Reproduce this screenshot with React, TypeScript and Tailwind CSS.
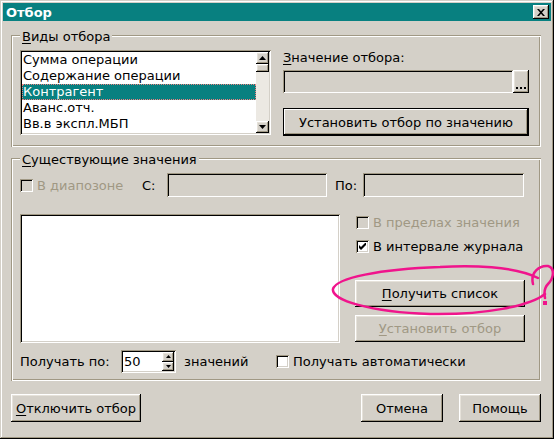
import React from 'react';

const RAISED =
  'shadow-[inset_-1px_-1px_#000000,inset_1px_1px_#ffffff,inset_-2px_-2px_#a09884,inset_2px_2px_#e6e2da]';
const RAISED_DEF =
  'border border-black shadow-[inset_-1px_-1px_#000000,inset_1px_1px_#ffffff,inset_-2px_-2px_#a09884]';
const SUNKEN =
  'shadow-[inset_1px_1px_#a09884,inset_-1px_-1px_#ffffff,inset_2px_2px_#000000,inset_-2px_-2px_#d4d0c8]';
const ETCHED =
  'shadow-[inset_1px_1px_#a09884,inset_-1px_-1px_#ffffff,inset_2px_2px_#ffffff,inset_-2px_-2px_#a09884]';

function U({ children }: { children: React.ReactNode }) {
  return <span className="underline decoration-1 underline-offset-[2px]">{children}</span>;
}

function Btn({
  children,
  className = '',
  def = false,
  disabled = false,
}: {
  children: React.ReactNode;
  className?: string;
  def?: boolean;
  disabled?: boolean;
}) {
  return (
    <div
      className={`flex items-center justify-center bg-[#d4d0c8] ${def ? RAISED_DEF : RAISED} ${
        disabled ? 'text-[#a09884]' : 'text-black'
      } ${className}`}
    >
      {children}
    </div>
  );
}

function Check({ checked = false, disabled = false }: { checked?: boolean; disabled?: boolean }) {
  return (
    <div
      className={`w-[13px] h-[13px] shrink-0 flex items-center justify-center ${SUNKEN} ${
        disabled ? 'bg-[#d4d0c8]' : 'bg-white'
      }`}
    >
      {checked && (
        <svg width="7" height="7" viewBox="0 0 7 7">
          <path d="M0 2 L2 4 L7 -1 L7 2 L2 7 L0 5 Z" fill="#000" />
        </svg>
      )}
    </div>
  );
}

function Group({
  label,
  className = '',
  children,
}: {
  label: React.ReactNode;
  className?: string;
  children: React.ReactNode;
}) {
  return (
    <div className={`relative ${ETCHED} ${className}`}>
      <div className="absolute left-[9px] top-[-6px] bg-[#d4d0c8] px-[2px] leading-[15px]">{label}</div>
      {children}
    </div>
  );
}

function Arrow({ up, size = 7 }: { up: boolean; size?: number }) {
  const h = Math.ceil(size / 2);
  return (
    <svg width={size} height={h} viewBox={`0 0 ${size} ${h}`}>
      {up ? (
        <path d={`M${size / 2} 0 L${size} ${h} L0 ${h} Z`} fill="#000" />
      ) : (
        <path d={`M0 0 L${size} 0 L${size / 2} ${h} Z`} fill="#000" />
      )}
    </svg>
  );
}

const items = ['Сумма операции', 'Содержание операции', 'Контрагент', 'Аванс.отч.', 'Вв.в экспл.МБП'];

export default function App() {
  return (
    <div className="relative w-[554px] h-[439px] bg-[#d4d0c8] p-[3px] font-['DejaVu_Sans',sans-serif] text-[13px] leading-[15px] text-black flex flex-col shadow-[inset_-1px_-1px_#000000,inset_1px_1px_#d4d0c8,inset_-2px_-2px_#a09884,inset_2px_2px_#ffffff]">
      {/* Title bar */}
      <div className="h-[18px] shrink-0 bg-[#088080] flex items-center justify-between pl-[3px] pr-[2px]">
        <span className="text-white font-bold text-[13px] leading-[15px]">Отбор</span>
        <div className={`w-[16px] h-[14px] bg-[#d4d0c8] flex items-center justify-center ${RAISED}`}>
          <svg width="8" height="7" viewBox="0 0 8 7">
            <path d="M0 0h2l2 2.3 2-2.3h2l-3 3.5 3 3.5h-2l-2-2.3-2 2.3h-2l3-3.5z" fill="#000" />
          </svg>
        </div>
      </div>

      {/* Group 1 */}
      <Group
        className="mt-[14px] ml-[8px] w-[530px] h-[112px] shrink-0"
        label={
          <>
            <U>В</U>иды отбора
          </>
        }
      >
        <div className="flex pt-[15px] pl-[9px]">
          <div className={`w-[251px] h-[85px] bg-white p-[2px] flex ${SUNKEN}`}>
            <div className="w-[234px] flex flex-col">
              {items.map((it, i) => (
                <div
                  key={it}
                  className={`h-[16px] leading-[16px] pl-[1px] whitespace-nowrap ${
                    i === 2 ? 'bg-[#088080] text-white outline-1 outline-dotted outline-[#f08080] -outline-offset-1' : ''
                  }`}
                >
                  {it}
                </div>
              ))}
            </div>
            <div className="w-[13px] flex flex-col bg-[#ece9e3]">
              <div className={`h-[12px] bg-[#d4d0c8] flex items-center justify-center ${RAISED}`}>
                <Arrow up />
              </div>
              <div className={`h-[8px] bg-[#d4d0c8] ${RAISED}`} />
              <div className="flex-1" />
              <div className={`h-[12px] bg-[#d4d0c8] flex items-center justify-center ${RAISED}`}>
                <Arrow up={false} />
              </div>
            </div>
          </div>

          <div className="ml-[12px] w-[246px] flex flex-col">
            <div className="h-[15px]">
              <U>З</U>начение отбора:
            </div>
            <div className="mt-[5px] h-[23px] flex">
              <div className={`w-[230px] h-full bg-[#d4d0c8] ${SUNKEN}`} />
              <div className={`w-[16px] h-full bg-[#d4d0c8] flex items-end justify-center pb-[4px] gap-[2px] ${RAISED}`}>
                <div className="w-[2px] h-[2px] bg-black" />
                <div className="w-[2px] h-[2px] bg-black" />
                <div className="w-[2px] h-[2px] bg-black" />
              </div>
            </div>
            <Btn def className="mt-[15px] h-[28px] w-full">
              Установить отбор по значению
            </Btn>
          </div>
        </div>
      </Group>

      {/* Group 2 */}
      <Group
        className="mt-[11px] ml-[8px] w-[530px] h-[223px] shrink-0"
        label={
          <>
            <U>С</U>уществующие значения
          </>
        }
      >
        <div className="flex flex-col pt-[15px] pl-[9px]">
          <div className="h-[24px] flex items-center">
            <div className="w-[122px] flex items-center">
              <Check disabled />
              <span className="ml-[4px] text-[#a09884]">В диапозоне</span>
            </div>
            <span className="w-[25px]">С:</span>
            <div className={`w-[160px] h-[24px] bg-[#d4d0c8] ${SUNKEN}`} />
            <span className="ml-[8px] w-[28px]">По:</span>
            <div className={`w-[161px] h-[24px] bg-[#d4d0c8] ${SUNKEN}`} />
          </div>

          <div className="mt-[17px] flex">
            <div className={`w-[320px] h-[129px] bg-white ${SUNKEN}`} />
            <div className="ml-[15px] w-[170px] flex flex-col">
              <div className="mt-[2px] h-[13px] flex items-center pl-[1px]">
                <Check disabled />
                <span className="ml-[4px] text-[#a09884] whitespace-nowrap">В пределах значения</span>
              </div>
              <div className="mt-[11px] h-[13px] flex items-center pl-[1px]">
                <Check checked />
                <span className="ml-[4px] whitespace-nowrap">В интервале журнала</span>
              </div>
              <Btn className="mt-[27px] h-[27px] w-full">
                <span>
                  <U>П</U>олучить список
                </span>
              </Btn>
              <Btn disabled className="mt-[8px] h-[27px] w-full">
                <span>
                  <U>У</U>становить отбор
                </span>
              </Btn>
            </div>
          </div>

          <div className="mt-[7px] h-[23px] flex items-center">
            <span className="w-[101px]">Получать по:</span>
            <div className={`w-[55px] h-[23px] bg-white flex p-[2px] ${SUNKEN}`}>
              <div className="flex-1 pl-[1px] leading-[19px]">50</div>
              <div className="w-[12px] flex flex-col">
                <div className={`flex-1 bg-[#d4d0c8] flex items-center justify-center ${RAISED}`}>
                  <Arrow up size={5} />
                </div>
                <div className={`flex-1 bg-[#d4d0c8] flex items-center justify-center ${RAISED}`}>
                  <Arrow up={false} size={5} />
                </div>
              </div>
            </div>
            <span className="ml-[8px] w-[92px]">значений</span>
            <Check />
            <span className="ml-[4px]">Получать автоматически</span>
          </div>
        </div>
      </Group>

      {/* Bottom buttons */}
      <div className="mt-[13px] h-[28px] flex shrink-0">
        <Btn className="ml-[8px] w-[130px] h-full">
          <span>
            <U>О</U>тключить отбор
          </span>
        </Btn>
        <Btn className="ml-auto w-[82px] h-full">Отмена</Btn>
        <Btn className="ml-[16px] mr-[10px] w-[82px] h-full">Помощь</Btn>
      </div>

      {/* Pink hand-drawn annotation */}
      <svg className="absolute left-0 top-0 pointer-events-none" width="554" height="439" viewBox="0 0 554 439">
        <g fill="none" stroke="#f0148c" strokeWidth="2.5" strokeLinecap="round">
          <path d="M538 278 C515 266 470 265 440 267 C380 269 336 278 333 289 C331 300 370 312 430 314 C485 315 530 306 545 294" />
          <path d="M533 284 C530 272 540 265 548 266 C555 268 554 278 548 284 C544 288 544 293 545 298" />
        </g>
        <rect x="543" y="301" width="4" height="4" fill="#f0148c" />
      </svg>
    </div>
  );
}
